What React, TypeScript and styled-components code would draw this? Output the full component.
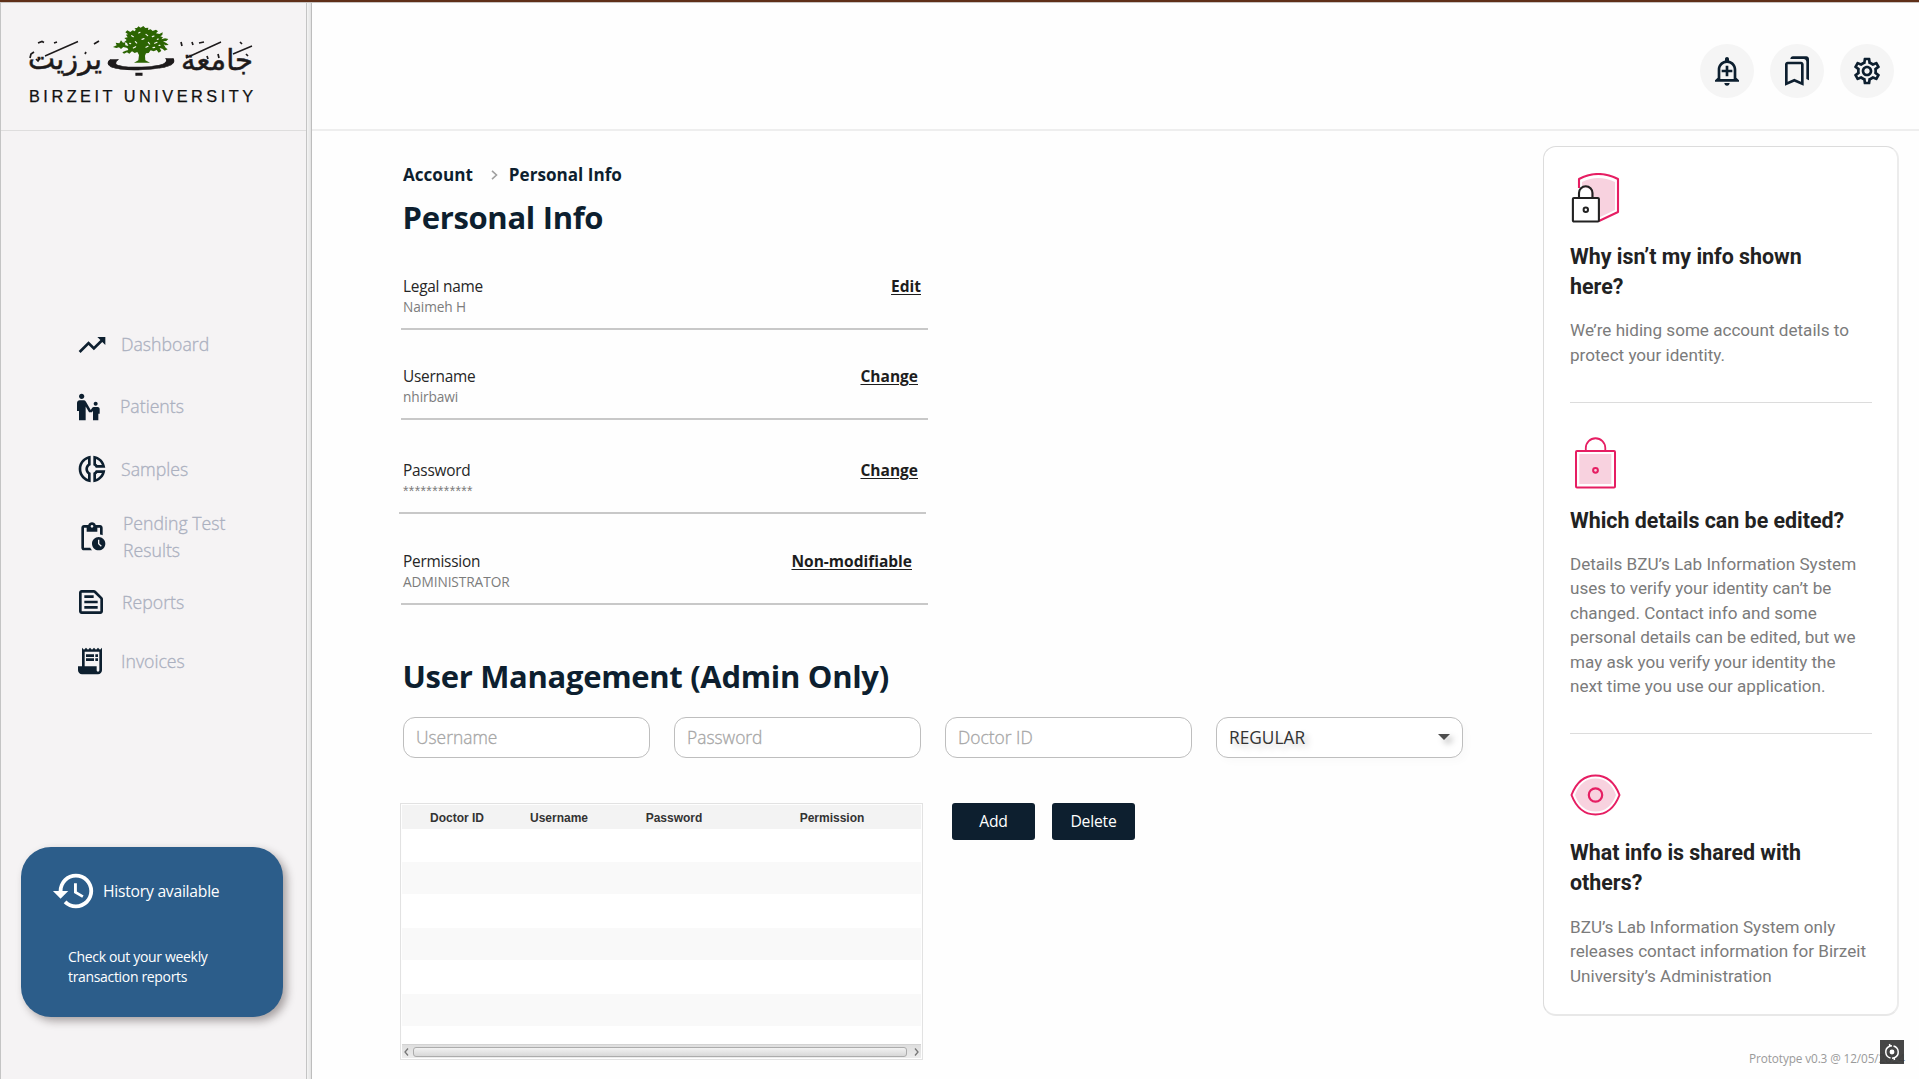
import React from "react";
import styled, { createGlobalStyle, css } from "styled-components";
import {
  MdTrendingUp,
  MdEscalatorWarning,
  MdOutlineDonutSmall,
  MdOutlinePendingActions,
  MdOutlineTextSnippet,
  MdReceiptLong,
  MdHistory,
  MdOutlineAddAlert,
  MdOutlineBookmarks,
  MdOutlineSettings,
} from "react-icons/md";

const navy = "#0d1f2f";
const pink = "#e61e63";
const uiFont = `"Open Sans", "Noto Sans", sans-serif`;

const GlobalStyle = createGlobalStyle`
  * { box-sizing: border-box; }
  body { margin: 0; background: #fefefe; font-family: ${uiFont}; overflow: hidden; }
  button, input { font-family: inherit; }
`;

const Window = styled.div`
  display: flex;
  width: 1919px;
  height: 1079px;
  border-top: 2px solid #5f2f18;
  box-shadow: inset 0 1px 0 #c8c4c2;
  background: #fefefe;
`;

/* ---------- sidebar ---------- */
const Sidebar = styled.aside`
  display: flex;
  flex-direction: column;
  flex: none;
  width: 307px;
  margin-top: 1px;
  background: #f5f3f4;
  border-left: 1px solid #c4c4c4;
  border-right: 1px solid #c4c4c4;
`;

const Splitter = styled.div`
  flex: none;
  width: 5px;
  margin-top: 1px;
  background: linear-gradient(90deg, #f4f4f4, #e2e2e2);
  border-right: 1px solid #bdbdbd;
`;

const Brand = styled.div`
  height: 128px;
  padding: 19px 0 0 24px;
  border-bottom: 1px solid #dedddd;
`;

const Nav = styled.nav`
  display: flex;
  flex-direction: column;
  padding-top: 194px;
`;

const NavItem = styled.a<{ $indent: number; $gap: number; $top?: number; $tall?: boolean }>`
  display: flex;
  align-items: center;
  gap: ${(p) => p.$gap}px;
  height: ${(p) => (p.$tall ? 54 : 40)}px;
  margin-top: ${(p) => p.$top ?? 0}px;
  padding-left: ${(p) => p.$indent}px;
  color: #abb0bf;
  font-size: 17.7px;
  font-weight: 300;
  line-height: 27px;
  -webkit-text-stroke: 0.3px #abb0bf;
  svg { flex: none; width: 32px; height: 32px; color: ${navy}; }
`;

const NavLabel = styled.span<{ $flush?: boolean }>`
  width: 112px;
  padding-bottom: ${(p) => (p.$flush ? 0 : 2)}px;
`;

const HistoryCard = styled.section`
  width: 262px;
  height: 170px;
  margin: 166px 0 0 20px;
  padding: 20px 0 0 30px;
  border-radius: 30px;
  background: #2c5d8a;
  color: #fff;
  box-shadow: 4px 4px 8px rgba(40, 25, 25, 0.38);
`;

const HistoryHead = styled.div`
  display: flex;
  align-items: center;
  gap: 6px;
  height: 47px;
  font-size: 15.7px;
  letter-spacing: -0.25px;
  svg { width: 46px; height: 46px; }
`;

const HistoryText = styled.p`
  width: 170px;
  margin: 33px 0 0 17px;
  font-size: 14px;
  letter-spacing: -0.33px;
  line-height: 20px;
`;

/* ---------- main ---------- */
const Main = styled.main`
  display: flex;
  flex-direction: column;
  flex: 1;
`;

const TopBar = styled.header`
  display: flex;
  justify-content: flex-end;
  align-items: center;
  gap: 16px;
  height: 129px;
  padding: 11px 25px 0 0;
  border-bottom: 2px solid #eeeeee;
`;

const RoundButton = styled.button`
  display: grid;
  place-items: center;
  width: 54px;
  height: 54px;
  padding: 0;
  border: 0;
  border-radius: 50%;
  background: #f5f5f5;
  color: ${navy};
  svg { width: 32px; height: 32px; }
`;

const Body = styled.div`
  display: flex;
  flex: 1;
  justify-content: space-between;
  padding: 15px 14px 0 89px;
`;

const Content = styled.div`
  width: 1070px;
  padding-top: 17px;
`;

const Crumbs = styled.div`
  display: flex;
  align-items: center;
  height: 22px;
  padding-left: 2px;
  color: ${navy};
  font-size: 17.1px;
  font-weight: 700;
  svg { margin: 2px 11px 0 18px; }
`;

const Title = styled.h1<{ $top: number }>`
  height: 44px;
  margin: ${(p) => p.$top}px 0 0 1.5px;
  color: ${navy};
  font-size: 31px;
  font-weight: 700;
  line-height: 44px;
  letter-spacing: -0.32px;
`;

const Fields = styled.div`
  margin-top: 37px;
`;

const Field = styled.div<{ $top?: number; $shift?: number; $inset: number }>`
  display: flex;
  justify-content: space-between;
  width: 527px;
  height: 54px;
  margin: ${(p) => p.$top ?? 0}px 0 0 ${(p) => -(p.$shift ?? 0)}px;
  padding: 0 ${(p) => p.$inset}px 0 ${(p) => 2 + (p.$shift ?? 0)}px;
  border-bottom: 2px solid #c8c8c8;
`;

const FieldLabel = styled.div`
  color: #262626;
  font-size: 15.4px;
  letter-spacing: -0.25px;
  line-height: 21px;
`;

const FieldValue = styled.div<{ $masked?: boolean }>`
  color: #7c7c7c;
  font-size: 13.7px;
  letter-spacing: -0.08px;
  line-height: 20px;
  ${(p) =>
    p.$masked &&
    css`
      font-family: "Liberation Sans", sans-serif;
      font-size: 14px;
      letter-spacing: 0.38px;
    `}
`;

const FieldAction = styled.a`
  color: #1d1d1d;
  font-size: 15.5px;
  font-weight: 700;
  line-height: 21px;
  text-decoration: underline;
  text-decoration-thickness: 1px;
  text-underline-offset: 2px;
`;

const FormRow = styled.div`
  display: flex;
  gap: 24px;
  margin: 19px 0 0 2px;
`;

const box = css`
  width: 247px;
  height: 41px;
  padding: 0 12px 1px;
  border: 1px solid #bebebe;
  border-radius: 12px;
  background: #fff;
`;

const TextInput = styled.input`
  ${box}
  font-size: 17.4px;
  outline: none;
  &::placeholder {
    color: #a6a6a6;
    font-weight: 300;
    opacity: 1;
    -webkit-text-stroke: 0.3px #a6a6a6;
  }
`;

const Select = styled.div`
  ${box}
  display: flex;
  align-items: center;
  justify-content: space-between;
  color: #333;
  font-size: 17.3px;
  text-shadow: 4px 4px 6px rgba(0, 0, 0, 0.2);
  box-shadow: 4px 4px 8px rgba(0, 0, 0, 0.02);
`;

const Caret = styled.span`
  width: 0;
  height: 0;
  border: 6px solid transparent;
  border-top-color: #4d4d4d;
  border-bottom: 0;
  filter: drop-shadow(4px 4px 3px rgba(0, 0, 0, 0.3));
`;

const TableRow = styled.div`
  display: flex;
  align-items: flex-start;
  margin-top: 45px;
`;

const Table = styled.div`
  display: flex;
  flex-direction: column;
  width: 523px;
  height: 257px;
  margin-left: -1px;
  padding: 1px;
  border: 1px solid #e2e2e2;
`;

const TableHead = styled.div`
  display: grid;
  grid-template-columns: 110px 94px 136px 180px;
  height: 24px;
  background: #f3f3f3;
  color: #333;
  font: bold 12px/26px "Liberation Sans", Arial, sans-serif;
  text-align: center;
`;

const Stripe = styled.div<{ $h: number; $odd?: boolean }>`
  height: ${(p) => p.$h}px;
  background: ${(p) => (p.$odd ? "#f9f9f9" : "#fff")};
`;

const ScrollBar = styled.div`
  display: flex;
  align-items: center;
  justify-content: space-between;
  height: 14px;
  padding: 0 2px;
  border-top: 1px solid #d3d3d3;
  background: linear-gradient(#dedede, #ececec);
`;

const Thumb = styled.div`
  width: 494px;
  height: 10px;
  margin-right: 4px;
  border: 1px solid #acacac;
  border-radius: 3px;
  background: linear-gradient(#f2f2f2, #d8d8d8);
`;

const Actions = styled.div`
  display: flex;
  gap: 17px;
  margin-left: 29px;
`;

const ActionButton = styled.button`
  width: 83px;
  height: 37px;
  padding: 0 0 2px;
  border: 0;
  border-radius: 3px;
  background: ${navy};
  color: #fff;
  font-size: 15.7px;
  letter-spacing: -0.2px;
`;

/* ---------- help column ---------- */
const HelpColumn = styled.div`
  display: flex;
  flex-direction: column;
  align-items: flex-end;
`;

const HelpCard = styled.section`
  width: 356px;
  height: 870px;
  margin-right: 6px;
  padding: 0 26px;
  border: 1px solid #dcdcdc;
  border-right: 2px solid #ececec;
  border-bottom: 2px solid #e8e8e8;
  border-radius: 13px;
  background: #fff;
  font-family: Roboto, sans-serif;
`;

const HelpItem = styled.article<{ $top: number; $bottom: number; $last?: boolean }>`
  width: 302px;
  padding: ${(p) => p.$top}px 0 ${(p) => p.$bottom}px;
  border-bottom: ${(p) => (p.$last ? 0 : 1)}px solid #dcdcdc;
  svg { display: block; }
`;

const HelpTitle = styled.h2<{ $top: number }>`
  width: 285px;
  margin: ${(p) => p.$top}px 0 0;
  color: #222;
  font-size: 21.4px;
  font-weight: 700;
  line-height: 29.7px;
`;

const HelpText = styled.p<{ $top: number }>`
  margin: ${(p) => p.$top}px 0 0;
  color: #7b7b7b;
  font-size: 17.1px;
  line-height: 24.4px;
  white-space: pre-line;
`;

const Footer = styled.footer`
  position: relative;
  margin-top: 32px;
  padding-top: 1px;
  color: #9a9a9a;
  font-size: 11.8px;
  letter-spacing: -0.12px;
  line-height: 18px;
`;

const CaptureBadge = styled.div`
  position: absolute;
  right: 1px;
  top: -8px;
  display: grid;
  place-items: center;
  width: 24px;
  height: 24px;
  background: rgba(56, 56, 56, 0.93);
`;

const arabic = {
  fontFamily: `"DejaVu Sans", "Noto Sans", sans-serif`,
  fill: "#1d1a1b",
  stroke: "#1d1a1b",
  strokeWidth: 0.5,
  lengthAdjust: "spacingAndGlyphs",
};

function Logo() {
  return (
    <svg width="240" height="90" viewBox="25 22 240 90">
      <g transform="translate(20 15) scale(.33333)">
        <path
          fill="#2c6402"
          strokeLinejoin="round"
          d="M279 96L290 91 287 83 298 85 303 76 309 83 315 82 316 91 325 93 321 84 313 81 320 75 313 69 323 67 318 59 324 58 316 52 322 46 331 51 338 46 345 49 347 42 343 39 351 39 355 34 362 38 370 33 376 39 385 38 384 45 392 43 398 48 408 44 414 49 408 55 418 57 428 52 427 60 421 64 429 67 424 73 435 70 445 72 439 78 429 79 440 85 446 90 436 91 431 88 437 98 443 103 434 107 427 101 419 99 424 108 416 113 410 105 401 109 392 106 386 114 378 115 375 122 376 136 390 143H342L355 136 357 120 352 111 344 114 336 109 328 116 321 112 312 116 307 112 317 107 325 105 322 99 310 96 303 102 297 97 289 99Z"
        />
        <path
          stroke="#f5f3f4"
          strokeWidth="3.500"
          strokeLinecap="round"
          fill="none"
          d="M335 62l5 3M356 54l4-2M378 58l5 4M397 65l5-2M346 80l4 4M366 73l6-2M385 82l4 5M404 85l7-3M340 99l7-4M412 73l3-1M329 85l3 1M378 97l6-3M399 98l5-1M417 91l3 0"
        />
      </g>
      <text x="181" y="70" fontSize="29" textLength="72" {...arabic}>جامعة</text>
      <text x="103" y="70" fontSize="34" textLength="77" {...arabic}>ب</text>
      <text x="28" y="69" fontSize="29" textLength="74" {...arabic}>يرزيت</text>
      <g stroke="#1d1a1b" fill="none" strokeWidth="1.400">
        <path d="M45 56L78 41.500M186 58l35-16M233 54l19-8" />
        <path
          strokeWidth="1.700"
          d="M38 43l4-1.500 2 1M54 43l3-1M94 44l5-3M181 42l1 4M199 43l5-1M207 56l1 3M218 54l1 4M85 54l1-2M30 58l1-4 3-2M36 59l2 2 2-3M240 42l2 2M192 42l1 3M246 54l2 2"
        />
      </g>
      <text
        x="29"
        y="102"
        fontSize="16.300"
        textLength="224"
        fontFamily="Liberation Sans, Arial, sans-serif"
        fill="#111"
        stroke="#111"
        strokeWidth=".25"
      >
        BIRZEIT UNIVERSITY
      </text>
    </svg>
  );
}

const ShieldLockIcon = () => (
  <svg width="50" height="51" viewBox="0 0 50 51" fill="none" strokeLinejoin="round">
    <path d="M12 9Q28 1 45 9V37L28 45V24H21V19Q20 14 12 15Z" fill="#f8d2df" />
    <path d="M9 15V6Q28-4 48 6V39L29 48" stroke={pink} strokeWidth="2.100" />
    <path d="M9 25V20a6.700 6.700 0 0 1 13.500 0V25" stroke="#222" strokeWidth="2.100" />
    <rect x="2.900" y="25" width="26" height="23.500" rx="1" fill="#fff" stroke="#222" strokeWidth="2.100" />
    <circle cx="15.800" cy="36.700" r="2.200" stroke="#222" strokeWidth="2" />
  </svg>
);

const BagLockIcon = () => (
  <svg width="50" height="52" viewBox="0 0 50 52" fill="none" strokeLinejoin="round">
    <path d="M15.800 13.500V11a9.700 9.700 0 0 1 19.500 0v2.500" stroke={pink} strokeWidth="1.800" />
    <rect x="6" y="14" width="39" height="36.500" rx="1" stroke={pink} strokeWidth="2" />
    <rect x="9.300" y="17" width="32" height="30" fill="#f8d2df" />
    <circle cx="25.500" cy="33.300" r="2.400" stroke={pink} strokeWidth="2" />
  </svg>
);

const EyeIcon = () => (
  <svg width="51" height="42" viewBox="0 0 51 42" fill="none" strokeLinejoin="round">
    <path d="M5 21Q11 4.500 25.500 4.500T46 21Q40 37.500 25.500 37.500T5 21Z" fill="#f8d2df" />
    <path d="M1.500 21Q9 1.500 25.500 1.500T49.500 21Q42 40.500 25.500 40.500T1.500 21Z" stroke={pink} strokeWidth="2" />
    <circle cx="25.500" cy="21" r="6.700" stroke={pink} strokeWidth="2.200" />
  </svg>
);

export default function App() {
  return (
    <>
      <GlobalStyle />
      <Window>
        <Sidebar>
          <Brand><Logo /></Brand>
          <Nav>
            <NavItem $indent={75} $gap={13}><MdTrendingUp /><NavLabel>Dashboard</NavLabel></NavItem>
            <NavItem $indent={72} $gap={15} $top={22}><MdEscalatorWarning /><NavLabel>Patients</NavLabel></NavItem>
            <NavItem $indent={75} $gap={13} $top={22}><MdOutlineDonutSmall /><NavLabel $flush>Samples</NavLabel></NavItem>
            <NavItem $indent={75} $gap={15} $top={21} $tall><MdOutlinePendingActions /><NavLabel $flush>Pending Test Results</NavLabel></NavItem>
            <NavItem $indent={74} $gap={15} $top={18}><MdOutlineTextSnippet /><NavLabel $flush>Reports</NavLabel></NavItem>
            <NavItem $indent={73} $gap={15} $top={19}><MdReceiptLong /><NavLabel $flush>Invoices</NavLabel></NavItem>
          </Nav>
          <HistoryCard>
            <HistoryHead><MdHistory />History available</HistoryHead>
            <HistoryText>Check out your weekly transaction reports</HistoryText>
          </HistoryCard>
        </Sidebar>
        <Splitter />
        <Main>
          <TopBar>
            <RoundButton><MdOutlineAddAlert /></RoundButton>
            <RoundButton><MdOutlineBookmarks /></RoundButton>
            <RoundButton><MdOutlineSettings /></RoundButton>
          </TopBar>
          <Body>
            <Content>
              <Crumbs>
                Account
                <svg width="7" height="10" viewBox="0 0 7 10" fill="none" stroke="#a0a0a0" strokeWidth="1.600">
                  <path d="M1 .8L5.500 5 1 9.200" />
                </svg>
                Personal Info
              </Crumbs>
              <Title $top={10}>Personal Info</Title>
              <Fields>
                <Field $inset={7}>
                  <div><FieldLabel>Legal name</FieldLabel><FieldValue>Naimeh H</FieldValue></div>
                  <FieldAction>Edit</FieldAction>
                </Field>
                <Field $top={36} $inset={10}>
                  <div><FieldLabel>Username</FieldLabel><FieldValue>nhirbawi</FieldValue></div>
                  <FieldAction>Change</FieldAction>
                </Field>
                <Field $top={40} $shift={2} $inset={8}>
                  <div><FieldLabel>Password</FieldLabel><FieldValue $masked>************</FieldValue></div>
                  <FieldAction>Change</FieldAction>
                </Field>
                <Field $top={37} $inset={16}>
                  <div><FieldLabel>Permission</FieldLabel><FieldValue>ADMINISTRATOR</FieldValue></div>
                  <FieldAction>Non-modifiable</FieldAction>
                </Field>
              </Fields>
              <Title $top={49}>User Management (Admin Only)</Title>
              <FormRow>
                <TextInput placeholder="Username" />
                <TextInput placeholder="Password" />
                <TextInput placeholder="Doctor ID" />
                <Select>REGULAR<Caret /></Select>
              </FormRow>
              <TableRow>
                <Table>
                  <TableHead>
                    <span>Doctor ID</span><span>Username</span><span>Password</span><span>Permission</span>
                  </TableHead>
                  <Stripe $h={33} />
                  <Stripe $h={32} $odd />
                  <Stripe $h={34} />
                  <Stripe $h={32} $odd />
                  <Stripe $h={34} />
                  <Stripe $h={32} $odd />
                  <Stripe $h={18} />
                  <ScrollBar>
                    <svg width="5" height="8" viewBox="0 0 5 8" fill="none" stroke="#777" strokeWidth="1.300"><path d="M4 .5L1 4l3 3.500" /></svg>
                    <Thumb />
                    <svg width="5" height="8" viewBox="0 0 5 8" fill="none" stroke="#777" strokeWidth="1.300"><path d="M1 .5L4 4 1 7.500" /></svg>
                  </ScrollBar>
                </Table>
                <Actions>
                  <ActionButton>Add</ActionButton>
                  <ActionButton>Delete</ActionButton>
                </Actions>
              </TableRow>
            </Content>
            <HelpColumn>
              <HelpCard>
                <HelpItem $top={26} $bottom={35}>
                  <ShieldLockIcon />
                  <HelpTitle $top={18}>Why isn’t my info shown here?</HelpTitle>
                  <HelpText $top={17}>{"We’re hiding some account details to\nprotect your identity."}</HelpText>
                </HelpItem>
                <HelpItem $top={34} $bottom={35}>
                  <BagLockIcon />
                  <HelpTitle $top={17}>Which details can be edited?</HelpTitle>
                  <HelpText $top={16}>
                    {"Details BZU’s Lab Information System\nuses to verify your identity can’t be\nchanged. Contact info and some\npersonal details can be edited, but we\nmay ask you verify your identity the\nnext time you use our application."}
                  </HelpText>
                </HelpItem>
                <HelpItem $top={40} $bottom={0} $last>
                  <EyeIcon />
                  <HelpTitle $top={22}>What info is shared with others?</HelpTitle>
                  <HelpText $top={17}>
                    {"BZU’s Lab Information System only\nreleases contact information for Birzeit\nUniversity’s Administration"}
                  </HelpText>
                </HelpItem>
              </HelpCard>
              <Footer>
                Prototype v0.3 @ 12/05/2024
                <CaptureBadge>
                  <svg width="16" height="18" viewBox="0 0 16 18" fill="none" stroke="#fff" strokeWidth="1.500">
                    <path d="M6.500 15A6.200 6.200 0 0 1 5.500 3.300L8 2.800M9.500 3a6.200 6.200 0 0 1 1 11.700L8 15.200M5.500 1l.6 3M10.500 17l-.6-3" />
                    <circle cx="8" cy="9" r="1.700" fill="#fff" />
                  </svg>
                </CaptureBadge>
              </Footer>
            </HelpColumn>
          </Body>
        </Main>
      </Window>
    </>
  );
}
